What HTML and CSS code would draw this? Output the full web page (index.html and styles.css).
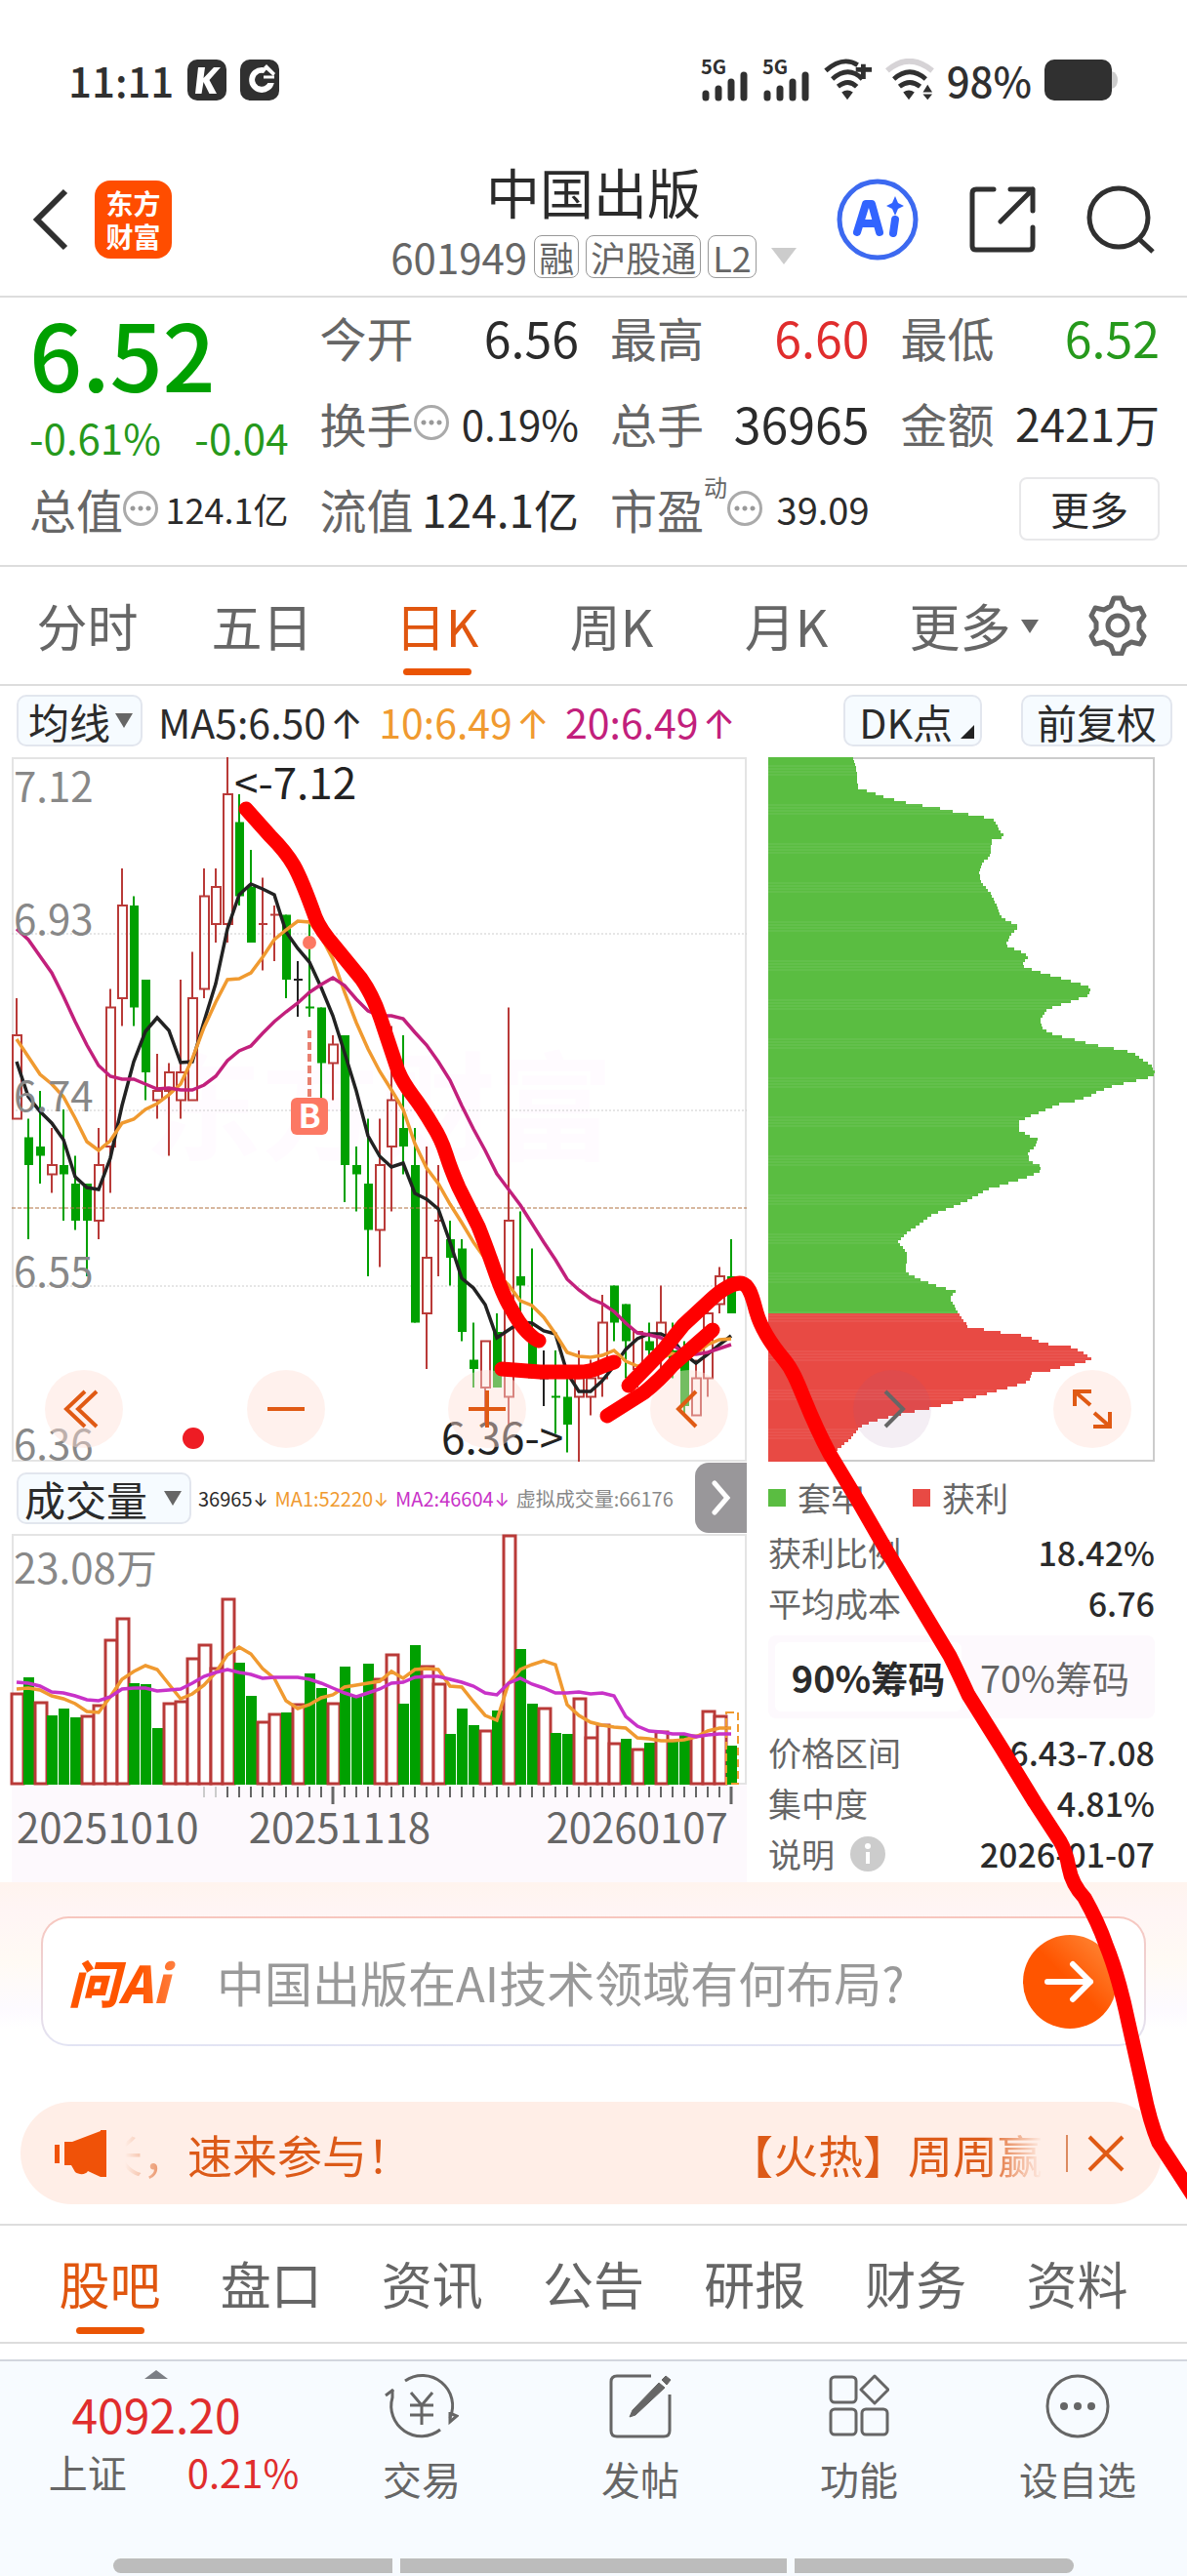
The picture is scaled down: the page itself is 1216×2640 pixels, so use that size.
FILE: index.html
```html
<!DOCTYPE html>
<html lang="zh-CN">
<head>
    <meta charset="UTF-8">
    <meta name="viewport" content="width=device-width, initial-scale=1.0">
    <title>中国出版 601949</title>
    <link rel="stylesheet" href="styles.css">
</head>
<body>
<div class="page">

    <!-- status bar -->
    <div class="status">
        <span class="time">11:11</span>
        <svg class="app-badge" viewBox="0 0 40 42"><rect width="40" height="42" rx="10" fill="#303030"/><path d="M11 8h7l-1.500 11L27 8h7L22.500 21 30 35h-7.500l-6-12L14.500 35H8z" fill="#fff"/></svg>
        <svg class="app-badge" viewBox="0 0 40 42"><rect width="40" height="42" rx="10" fill="#303030"/><path d="M23 8a13 13 0 1 0 12 15l-6-1a7 7 0 1 1-5-8l4-5z" fill="#fff"/><path d="M27 5l9 9-2 3-10-9z" fill="#fff"/><path d="M20 14l8 6h8v4H20l-5-3z" fill="#303030"/><path d="M24 18h11" stroke="#fff" stroke-width="3"/></svg>
        <div class="status-right">
            <svg class="signal" viewBox="0 0 50 44"><text x="0" y="16">5G</text><path d="M5 36v4M18 31v9M31 24v16M44 17v23" stroke="#303030" stroke-width="7" stroke-linecap="round"/></svg>
            <svg class="signal" viewBox="0 0 50 44"><text x="0" y="16">5G</text><path d="M5 36v4M18 31v9M31 24v16M44 17v23" stroke="#303030" stroke-width="7" stroke-linecap="round"/></svg>
            <svg class="wifi" viewBox="0 0 52 44"><g fill="none" stroke="#303030" stroke-width="5"><path d="M2 12Q20-4 36 6"/><path d="M9 21q17-15 32 0M15 29q11-9 20 0"/><path d="M42 5v16M34 11h17"/></g><path d="M19 35q6-4 12 0l-6 8z" fill="#303030"/></svg>
            <svg class="wifi" viewBox="0 0 52 44"><path d="M2 12q23-20 48 0" fill="none" stroke="#d6d3d6" stroke-width="6"/><path d="M9 21q17-15 34 0M15 29q11-9 22 0" fill="none" stroke="#303030" stroke-width="5"/><path d="M19 35q6-4 12 0l-6 8zM45 27l5 8H40zM45 43l5-6H40z" fill="#303030"/></svg>
            <span class="percent">98%</span>
            <svg class="battery" viewBox="0 0 76 42"><rect width="69" height="42" rx="10" fill="#303030"/><path d="M69 12q6 2 6 9t-6 9z" fill="#ccc"/></svg>
        </div>
    </div>

    <!-- title bar -->
    <header class="header">
        <div class="header-left">
            <button class="icon-btn" aria-label="返回"><svg width="38" height="66" viewBox="0 0 38 66"><path d="M34 4L5 33l29 29" fill="none" stroke="#303030" stroke-width="6"/></svg></button>
            <a class="logo" href="#"><span>东方</span><span>财富</span></a>
        </div>
        <div class="stock">
            <h1>中国出版</h1>
            <div class="code">
                <span class="num">601949</span><span class="tag">融</span><span class="tag">沪股通</span><span class="tag">L2</span>
                <svg width="26" height="17" viewBox="0 0 26 17"><path d="M0 0h26L13 17z" fill="#ccc"/></svg>
            </div>
        </div>
        <div class="header-right">
            <button class="icon-btn" aria-label="AI"><svg width="84" height="84" viewBox="0 0 84 84"><circle cx="42" cy="42" r="39" fill="none" stroke="#3c69f0" stroke-width="5"/><path d="M21 55L30 26h6l8 29" fill="none" stroke="#3264ff" stroke-width="8" stroke-linejoin="round" stroke-linecap="round"/><path d="M26 46h14M60 42l-2 14" stroke="#3264ff" stroke-width="8" stroke-linecap="round"/><path d="M60 18l3 7 6 3-6 3-3 7-3-7-6-3 6-3z" fill="#3264ff"/></svg></button>
            <button class="icon-btn" aria-label="分享"><svg width="68" height="68" viewBox="0 0 68 68"><g fill="none" stroke="#303030" stroke-width="5" stroke-linecap="round" stroke-linejoin="round"><path d="M25 3H7q-4 0-4 4v54q0 4 4 4h54q4 0 4-4V42"/><path d="M42 3h23v22M65 3L32 36"/></g></svg></button>
            <button class="icon-btn" aria-label="搜索"><svg width="70" height="70" viewBox="0 0 70 70"><circle cx="33" cy="33" r="30" fill="none" stroke="#303030" stroke-width="5"/><path d="M54 55l14 13" stroke="#303030" stroke-width="5"/></svg></button>
        </div>
    </header>

    <!-- quote -->
    <section class="quote">
        <div class="price">
            <strong>6.52</strong>
            <div class="change"><span>-0.61%</span><span>-0.04</span></div>
        </div>
        <div class="cell"><span>今开</span><b class="n5">6.56</b></div>
        <div class="cell"><span>最高</span><b class="n5 red">6.60</b></div>
        <div class="cell"><span>最低</span><b class="n5 green">6.52</b></div>
        <div class="cell"><span>换手</span><i class="dots"></i><b class="n3">0.19%</b></div>
        <div class="cell"><span>总手</span><b class="n5">36965</b></div>
        <div class="cell"><span>金额</span><b class="n4">2421万</b></div>
        <div class="cell"><span>总值</span><i class="dots"></i><b class="n1">124.1亿</b></div>
        <div class="cell"><span>流值</span><b class="n4">124.1亿</b></div>
        <div class="cell"><span>市盈</span><sup>动</sup><i class="dots"></i><b class="n2">39.09</b></div>
        <div class="cell"><button class="more-btn">更多</button></div>
    </section>

    <!-- period tabs -->
    <nav class="periods">
        <a href="#">分时</a>
        <a href="#">五日</a>
        <a href="#" class="active">日K</a>
        <a href="#">周K</a>
        <a href="#">月K</a>
        <a href="#" class="has-arrow">更多</a>
        <button class="icon-btn" aria-label="设置"><svg width="62" height="62" viewBox="0 0 62 62"><g fill="none" stroke="#666" stroke-width="5" stroke-linejoin="round"><path d="M24 11L27 3h8l3 8 7 4 9-2 4 8-5 7v7l5 7-4 8-9-2-7 4-3 8h-8l-3-8-7-4-9 2-4-8 5-7v-7l-5-7 4-8 9 2z"/><circle cx="31" cy="31" r="10"/></g></svg></button>
    </nav>

    <!-- moving averages -->
    <div class="ma-bar">
        <label class="drop"><select aria-label="主图指标"><option>均线</option></select></label>
        <span class="ma">MA5:6.50<i class="arr">↑</i></span>
        <span class="ma orange">10:6.49<i class="arr">↑</i></span>
        <span class="ma magenta">20:6.49<i class="arr">↑</i></span>
        <button class="chip dk">DK点</button>
        <button class="chip">前复权</button>
    </div>

    <main class="charts">
        <div class="left">
            <div class="canvas">
                <svg id="kline" viewBox="0 0 753 722"></svg>
                <div class="float-btns">
                    <button aria-label="最前"><svg viewBox="0 0 80 80"><path d="M41 22L22 40l19 18M53 22L34 40l19 18"/></svg></button>
                    <button aria-label="缩小"><svg viewBox="0 0 80 80"><path d="M21 40h38"/></svg></button>
                    <button aria-label="放大"><svg viewBox="0 0 80 80"><path d="M21 40h38M40 21v38"/></svg></button>
                    <button aria-label="向左"><svg viewBox="0 0 80 80"><path d="M47 22L29 40l18 18"/></svg></button>
                </div>
            </div>
            <div class="vol-bar">
                <label class="drop wide"><select aria-label="副图指标"><option>成交量</option></select></label>
                <span>36965<i class="arr">↓</i></span>
                <span class="orange">MA1:52220<i class="arr">↓</i></span>
                <span class="violet">MA2:46604<i class="arr">↓</i></span>
                <span class="gray">虚拟成交量:66176</span>
                <button class="next" aria-label="下一个"><svg width="20" height="36" viewBox="0 0 20 36"><path d="M3 3l13 15L3 33" fill="none" stroke="#fff" stroke-width="5" stroke-linecap="round"/></svg></button>
            </div>
            <svg id="volume" viewBox="0 0 753 257"></svg>
            <div class="axis">
                <svg id="ticks" viewBox="0 0 753 20"></svg>
                <div class="dates"><span>20251010</span><span>20251118</span><span>20260107</span></div>
            </div>
        </div>

        <div class="right">
            <div class="canvas">
                <svg id="chips" viewBox="0 0 396 722"></svg>
                <div class="float-btns">
                    <button class="dim" aria-label="向右"><svg viewBox="0 0 80 80"><path d="M33 22l18 18-18 18"/></svg></button>
                    <button aria-label="全屏"><svg viewBox="0 0 80 80"><path d="M22 37V22h17M22 22l16 14M58 43v15H41M58 58L42 44"/></svg></button>
                </div>
            </div>
            <div class="legend"><span class="key-green">套牢</span><span class="key-red">获利</span></div>
            <div class="row"><span>获利比例</span><b>18.42%</b></div>
            <div class="row"><span>平均成本</span><b>6.76</b></div>
            <div class="switch"><button class="on">90%筹码</button><button>70%筹码</button></div>
            <div class="row"><span>价格区间</span><b>6.43-7.08</b></div>
            <div class="row"><span>集中度</span><b>4.81%</b></div>
            <div class="row"><span>说明</span><svg width="36" height="36" viewBox="0 0 36 36"><circle cx="18" cy="18" r="18" fill="#ccc"/><circle cx="18" cy="10" r="3" fill="#fff"/><path d="M18 16v12" stroke="#fff" stroke-width="4"/></svg><b>2026-01-07</b></div>
        </div>
    </main>

    <!-- ask AI -->
    <section class="ask">
        <form class="ask-box">
            <span class="ask-logo">问Ai</span>
            <input type="text" aria-label="问AI" placeholder="中国出版在AI技术领域有何布局?">
            <button type="button" aria-label="发送"><svg width="52" height="46" viewBox="0 0 52 46"><path d="M3 23h44M29 5l18 18-18 18" fill="none" stroke="#fff" stroke-width="6" stroke-linecap="round" stroke-linejoin="round"/></svg></button>
        </form>
    </section>

    <div class="notice">
        <svg width="54" height="48" viewBox="0 0 54 48"><path d="M0 15h5v19H0zM10 12h8L47 1v-1h6v48h-6l-13-6c-2 4-9 4-13 1l-4-7h-7z" fill="#f05208"/></svg>
        <div class="marquee"><span>长，速来参与！</span><span>【火热】周周赢</span></div>
        <button aria-label="关闭"><svg width="38" height="38" viewBox="0 0 38 38"><path d="M2 2l34 34M36 2L2 36" stroke="#e05a14" stroke-width="4"/></svg></button>
    </div>

    <nav class="sections">
        <a href="#" class="active">股吧</a>
        <a href="#">盘口</a>
        <a href="#">资讯</a>
        <a href="#">公告</a>
        <a href="#">研报</a>
        <a href="#">财务</a>
        <a href="#">资料</a>
    </nav>

    <!-- bottom bar -->
    <footer class="bottom">
        <div class="tabbar">
            <a href="#" class="index">
                <svg width="24" height="9" viewBox="0 0 24 9"><path d="M12 0l12 9H0z" fill="#7c7f85"/></svg>
                <b>4092.20</b>
                <div class="index-row"><span>上证</span><span class="red">0.21%</span></div>
            </a>
            <a href="#"><svg width="76" height="68" viewBox="0 0 76 68"><g fill="none" stroke="#666" stroke-width="3"><path d="M21 8A31 31 0 0 1 67 46M8 17v8A31 31 0 0 0 57 58"/><path d="M69 42l5 2-7 6V40M1 23l8-6"/><path d="M27 20l11 13 11-13M38 33v20M26 33h24M26 43h24"/></g></svg>交易</a>
            <a href="#"><svg width="66" height="68" viewBox="0 0 66 68"><path d="M44 3H9q-6 0-6 6v50q0 6 6 6h48q6 0 6-6V22" fill="none" stroke="#666" stroke-width="3"/><path d="M52 10l6 5-30 28-6 2 3-7zM55 7l4-4 5 4-4 5z" fill="#666" stroke="#666"/></svg>发帖</a>
            <a href="#"><svg width="62" height="68" viewBox="0 0 62 68"><g fill="none" stroke="#666" stroke-width="3"><rect x="2" y="4" width="26" height="26" rx="4"/><rect x="2" y="37" width="26" height="26" rx="4"/><rect x="34" y="37" width="26" height="26" rx="4"/><path d="M47 3l14 14-14 14-14-14z" stroke-linejoin="round"/></g></svg>功能</a>
            <a href="#"><svg width="68" height="68" viewBox="0 0 68 68"><circle cx="34" cy="34" r="31" fill="none" stroke="#666" stroke-width="3"/><g fill="#666"><circle cx="20" cy="34" r="4"/><circle cx="34" cy="34" r="4"/><circle cx="48" cy="34" r="4"/></g></svg>设自选</a>
        </div>
        <div class="home-bar"><span></span><span class="mid"></span><span></span></div>
    </footer>

    <!-- freehand marks over the page -->
    <svg class="marks" viewBox="0 0 1216 2640" preserveAspectRatio="none">
        <path d="M252 829L277 857Q293 873 301 887T323 940Q328 953 343 970L370 1003Q382 1020 390 1044T408 1098Q413 1110 423 1123T443 1153Q452 1167 457 1183T470 1217L490 1257Q498 1277 507 1303T523 1340Q532 1357 540 1365T552 1374"/>
        <path d="M514 1403L553 1406H593Q604 1406 613 1402T629 1396"/>
        <path d="M622 1451L660 1427Q675 1415 690 1398L730 1363"/>
        <path d="M644 1420L680 1383 700 1358 727 1333Q745 1316 758 1315C768 1315 771 1331 775 1345S787 1374 803 1393 823 1440 850 1490L880 1540 907 1587 943 1647 973 1697Q981 1713 992 1737L1027 1793 1060 1847 1086 1887Q1092 1897 1095 1914T1111 1945Q1125 1970 1133 1993 1146 2025 1156 2073L1171 2140Q1178 2175 1187 2196L1206 2225 1226 2256"/>
    </svg>
</div>
<script src="chart.js"></script>
</body>
</html>
```

FILE: styles.css
```css
* { box-sizing: border-box; margin: 0; padding: 0; }
body { font-family: "Noto Sans CJK SC", "Noto Sans", sans-serif; background: #fff; color: #2b2b2b; }
a { color: inherit; text-decoration: none; }
button, select, input { font: inherit; color: inherit; background: none; border: none; outline: none; }
b, i { font-weight: 400; font-style: normal; }
svg { display: block; flex-shrink: 0; }

.page { position: relative; overflow: hidden; }
.red { color: #e02d2d; }
.green { color: #26991c; }
.orange { color: #f09a30; }
.magenta { color: #c2207c; }
.violet { color: #c832c8; }
.gray { color: #888; }

.status {
    display: flex;
    align-items: center;
    gap: 14px;
    height: 150px;
    padding: 14px 70px 0;
    color: #303030;
}
.time { font-size: 42px; font-weight: 500; line-height: 60px; }
.app-badge { width: 40px; height: 42px; }
.status-right { display: flex; align-items: center; gap: 13px; margin-left: auto; }
.signal { width: 50px; height: 44px; overflow: visible; }
.signal text { font-size: 20px; font-weight: 700; fill: #303030; }
.wifi { width: 50px; height: 44px; }
.percent { font-size: 42px; font-weight: 500; line-height: 60px; }
.battery { width: 76px; height: 42px; }

.header {
    display: grid;
    grid-template-columns: 1fr auto 1fr;
    align-items: center;
    height: 153px;
    padding: 0 33px 4px;
}
.header-left, .header-right { display: flex; align-items: center; }
.header-left { gap: 26px; }
.header-right { justify-content: flex-end; gap: 52px; }
.icon-btn { cursor: pointer; }
.logo {
    display: flex;
    flex-direction: column;
    align-items: center;
    justify-content: center;
    width: 79px;
    height: 80px;
    border-radius: 16px;
    background: #ff4d00;
    color: #fff;
    font-size: 28px;
    font-weight: 700;
    line-height: 34px;
}
.stock { text-align: center; }
.stock h1 { font-size: 55px; font-weight: 400; line-height: 76px; }
.code { display: flex; align-items: center; gap: 7px; color: #666; }
.code .num { font-size: 42px; line-height: 60px; }
.code .tag { border: 1px solid #999; border-radius: 8px; padding: 0 4px; font-size: 36px; line-height: 42px; }
.code svg { margin-left: 8px; }

.quote {
    display: grid;
    grid-template-columns: repeat(4, 1fr);
    grid-auto-rows: 88px;
    column-gap: 32px;
    padding: 0 28px 10px 30px;
    border-top: 2px solid #ddd;
    border-bottom: 2px solid #ddd;
}
.price { grid-row: span 2; color: #00a000; }
.price strong { display: block; font-size: 95px; font-weight: 500; line-height: 112px; }
.change { display: flex; justify-content: space-between; font-size: 42px; line-height: 62px; color: #26991c; }
.cell { display: flex; align-items: center; padding-bottom: 8px; white-space: nowrap; }
.cell span { font-size: 48px; color: #666; }
.cell b { margin-left: auto; }
.cell sup { font-size: 24px; color: #666; align-self: flex-start; }
.n1 { font-size: 36px; }
.n2 { font-size: 38px; }
.n3 { font-size: 42px; }
.n4 { font-size: 46px; }
.n5 { font-size: 50px; }
.dots {
    width: 36px;
    height: 36px;
    border: 3px solid #aaa;
    border-radius: 50%;
    background: radial-gradient(circle, #999 2px, transparent 3px) center / 8px 8px;
    background-clip: content-box;
    padding: 11px 3px;
}
.more-btn {
    margin-left: auto;
    width: 144px;
    height: 65px;
    border: 2px solid #e8e8ea;
    border-radius: 8px;
    font-size: 40px;
    line-height: 56px;
}

.periods {
    display: grid;
    grid-template-columns: repeat(5, 179fr) 205fr 90fr;
    align-items: center;
    height: 122px;
    padding-right: 26px;
    border-bottom: 2px solid #ddd;
    font-size: 52px;
    color: #666;
    text-align: center;
}
.periods a, .sections a { line-height: 118px; }
.active { color: #e0560f; position: relative; }
.active::after {
    content: "";
    position: absolute;
    left: 50%;
    bottom: 8px;
    width: 70px;
    height: 7px;
    margin-left: -35px;
    border-radius: 4px;
    background: #ea5404;
}
.has-arrow::after {
    content: "";
    display: inline-block;
    margin-left: 10px;
    vertical-align: 14px;
    border: 9px solid transparent;
    border-top: 14px solid #666;
    border-bottom: 0;
}
.periods .icon-btn svg { margin: 0 auto; }

.ma-bar { display: flex; align-items: center; height: 73px; padding: 0 15px 2px 17px; font-size: 41px; white-space: nowrap; }
.drop, .chip {
    display: flex;
    align-items: center;
    flex-shrink: 0;
    height: 53px;
    border: 2px solid #e2e6ee;
    border-radius: 10px;
    background: #f6fbff;
}
.drop { padding: 0 8px 0 10px; gap: 4px; font-size: 42px; }
.drop select { appearance: none; height: 49px; line-height: 49px; }
.drop::after { content: ""; border: 9px solid transparent; border-top: 15px solid #666; border-bottom: 0; }
.wide { gap: 16px; padding-left: 6px; }
.arr { font-family: Inter, sans-serif; margin-left: 4px; }
.ma { margin-left: 16px; }
.chip { padding: 0 14px; }
.dk { margin: 0 40px 0 auto; gap: 8px; padding-right: 6px; }
.dk::after { content: ""; align-self: flex-end; margin-bottom: 6px; border-left: 14px solid transparent; border-bottom: 14px solid #222; }

.charts {
    display: grid;
    grid-template-columns: minmax(0, 753fr) minmax(0, 396fr);
    column-gap: 22px;
    padding: 0 33px 0 12px;
}
.canvas { position: relative; }
.canvas svg, #volume, #ticks { width: 100%; overflow: visible; }
.label { font-size: 42px; fill: #888; }
.note { font-size: 44px; fill: #222; }
.watermark { font-size: 120px; font-weight: 700; fill: #fffbff; text-anchor: middle; }
.float-btns { position: absolute; left: 34px; right: 19px; bottom: 14px; display: flex; justify-content: space-between; }
.right .float-btns { left: 22%; right: 6%; }
.float-btns button { width: 80px; height: 80px; border-radius: 50%; background: rgba(255, 225, 214, 0.45); }
.float-btns path { fill: none; stroke: #e05a14; stroke-width: 4; }
.float-btns .dim { background: rgba(150, 90, 150, 0.1); }
.float-btns .dim path { stroke: #666; }

.vol-bar {
    display: flex;
    align-items: center;
    height: 74px;
    padding-left: 5px;
    gap: 7px;
    font-size: 20px;
    white-space: nowrap;
}
.vol-bar .arr { margin-left: 1px; font-size: 18px; }
.next {
    display: flex;
    align-items: center;
    justify-content: center;
    flex-shrink: 0;
    width: 53px;
    height: 72px;
    margin-left: auto;
    border-radius: 14px 0 0 14px;
    background: #99979a;
}
.axis { height: 100px; background: #fdf9fd; }
.dates { display: grid; grid-template-columns: 237fr 304fr 205fr; padding-left: 5px; font-size: 42px; line-height: 44px; color: #666; }

.legend { display: flex; gap: 50px; margin: 11px 0 4px; font-size: 34px; line-height: 52px; color: #666; }
.legend span { display: flex; align-items: center; gap: 12px; }
.legend span::before { content: ""; width: 18px; height: 18px; background: #5abd41; }
.legend .key-red::before { background: #e84a44; }
.row { display: flex; align-items: center; gap: 16px; font-size: 34px; line-height: 52px; color: #666; white-space: nowrap; }
.row b { margin-left: auto; font-weight: 500; color: #2b2b2b; }
.switch {
    display: grid;
    grid-template-columns: 1fr 1fr;
    height: 85px;
    margin: 7px 0 9px;
    padding: 7px;
    border-radius: 8px;
    background: #fdf9fd;
    font-size: 38px;
    color: #666;
    white-space: nowrap;
}
.switch button { border-radius: 6px; }
.switch .on { background: #fff; font-weight: 700; color: #2b2b2b; }

.ask { padding: 35px 42px 57px; background: linear-gradient(#fff4ee, #fff5f5 30px, #fffaf4 80px, #fdfaff 130px, #fff 150px); }
.ask-box {
    display: flex;
    align-items: center;
    height: 133px;
    padding: 0 28px 0 26px;
    border: 2px solid transparent;
    border-radius: 28px;
    background: linear-gradient(#fff, #fff) padding-box, linear-gradient(#f7c6be, #e2e4f4) border-box;
}
.ask-logo {
    width: 120px;
    font-size: 52px;
    font-weight: 900;
    font-style: italic;
    background: linear-gradient(90deg, #ff5500 60%, #ff8a50);
    background-clip: text;
    color: transparent;
    white-space: nowrap;
}
.ask-box input { flex: 1; min-width: 0; margin-left: 32px; font-size: 49px; }
.ask-box input::placeholder { color: #999; }
.ask-box button {
    display: flex;
    align-items: center;
    justify-content: center;
    width: 96px;
    height: 96px;
    border-radius: 50%;
    background: linear-gradient(45deg, #ff5500 50%, #ff9040);
}

.notice {
    display: flex;
    align-items: center;
    height: 105px;
    margin: 0 26px 20px 21px;
    padding: 0 38px 0 35px;
    border-radius: 53px;
    background: #ffeee7;
    color: #dc5a18;
}
.marquee {
    display: flex;
    justify-content: space-between;
    flex: 1;
    margin: 0 24px 0 18px;
    overflow: hidden;
    font-size: 46px;
    line-height: 64px;
    white-space: nowrap;
    mask-image: linear-gradient(90deg, transparent, #000 60px, #000 calc(100% - 60px), transparent);
}
.marquee span:first-child { margin-left: -28px; }
.notice button { padding-left: 20px; border-left: 2px solid #dc8a60; }

.sections {
    display: grid;
    grid-template-columns: repeat(7, 1fr);
    height: 123px;
    padding: 0 30px;
    border-top: 2px solid #ddd;
    border-bottom: 2px solid #ddd;
    font-size: 52px;
    color: #666;
    text-align: center;
}

.bottom { margin-top: 16px; border-top: 2px solid #d2d6de; background: #f7fbff; color: #666; }
.tabbar { display: grid; grid-template-columns: 320fr repeat(4, 224fr); height: 202px; }
.tabbar a {
    display: flex;
    flex-direction: column;
    align-items: center;
    font-size: 40px;
    line-height: 80px;
    padding-top: 12px;
}
.tabbar .index { padding-top: 9px; }
.index b { font-size: 48px; line-height: 70px; color: #e02d2d; }
.index-row { display: flex; gap: 62px; padding-left: 36px; line-height: 50px; }
.home-bar { display: flex; gap: 8px; width: 81%; height: 18px; margin: 0 auto; padding-bottom: 3px; }
.home-bar span { flex: 286; border-radius: 8px 0 0 8px; background: #bcbcbc; }
.home-bar .mid { flex: 394; border-radius: 0; }
.home-bar span:last-child { border-radius: 0 8px 8px 0; }

.marks { position: absolute; left: 0; top: 0; width: 100%; height: 100%; pointer-events: none; }
.marks path { fill: none; stroke: #f00; stroke-width: 15; stroke-linecap: round; stroke-linejoin: round; }
```

FILE: chart.js
```javascript
const RED = '#b93a38', GREEN = '#00a000', DARK = '#222';
const STEP = 12, X0 = 5, CENT = 9.5;

// kind, high, body top, body bottom, low - in cents below 7.12
const candles = [
    ['r',26,30,39,39],['g',39,41,44,52],['g',36,42,43,46],['r',40,44,45,47],['g',38,44,45,50],
    ['g',43,46,50,51],['g',46,46,50,56],['r',40,44,50,52],['r',25,27,42,47],['r',12,16,26,29],
    ['g',15,16,27,29],['g',24,24,34,37],['r',32,36,37,39],['r',33,34,36,43],['r',24,34,37,39],
    ['r',21,26,37,37],['r',12,15,25,26],['r',12,14,18,20],['r',0,4,18,20],['g',4,7,15,16],
    ['g',10,14,20,20],['r',13,18,18,23],['r',16,17,17,22],['g',17,17,24,26],['k',22,24,24,28],
    ['g',18,27,27,28],['g',27,27,33,37],['r',30,31,33,37],['g',30,30,44,48],['g',42,44,45,49],
    ['g',39,46,51,56],['r',39,44,51,55],['r',29,37,42,49],['g',30,40,42,45],['g',40,44,61,61],
    ['r',42,54,60,66],['r',44,50,50,56],['g',50,52,54,57],['g',52,53,62,63],['g',61,65,66,68],
    ['r',63,63,68,72],['g',60,62,68,68],['r',27,50,69,72],['g',49,56,57,61],['g',53,63,67,67],
    ['k',64,67,67,70],['g',64,69,69,73],['g',66,69,72,75],['r',64,67,69,76],['r',65,67,69,71],
    ['r',58,61,67,69],['g',57,57,61,63],['g',59,59,63,67],['r',62,62,66,68],['g',61,63,64,65],
    ['r',57,61,64,66],['g',61,64,65,67],['g',63,64,70,71],['r',65,67,71,71],['r',59,60,67,69],
    ['r',55,56,59,60],['g',52,56,60,60]
];
const ma5 = [312,348,363,375,392,430,441,443,411,357,312,281,267,280,313,312,271,232,176,141,130,135,141,179,196,210,236,265,303,342,388,409,420,416,447,453,463,497,534,544,561,595,587,579,580,588,591,631,650,650,639,624,607,596,591,591,597,612,621,612,602,593];
const ma10 = [289,307,325,335,348,370,394,403,393,375,371,361,355,346,335,309,277,251,228,227,221,205,187,177,168,169,184,207,241,272,299,322,341,361,396,421,437,458,477,497,514,529,541,557,562,574,591,610,614,615,613,608,619,624,623,616,611,614,611,602,597,596];
const ma20 = [176,187,204,221,245,271,295,316,327,330,330,335,340,339,341,341,336,327,311,301,296,283,271,261,252,241,233,226,234,248,260,265,265,268,282,295,312,331,357,381,403,427,443,459,478,497,515,535,546,555,560,568,580,590,592,595,602,611,612,610,606,602];

const volumes = [94,110,85,71,78,69,71,82,149,171,104,103,58,84,86,130,144,120,191,125,91,65,73,74,83,114,99,84,121,90,124,109,134,83,143,122,104,52,78,61,56,76,256,139,83,79,53,52,89,49,62,43,47,37,43,55,44,51,51,76,71,40];
const volKinds = 'rgrgggrrrrgggrrrrrrggrrgrggrgggrrggrrgggrgrggrggrrrrgrgrggrrrg';
const vma1 = [159,158,160,166,169,174,182,183,167,149,141,135,139,154,169,164,155,142,124,116,123,138,148,171,179,175,168,165,157,155,153,151,141,148,139,138,139,156,157,172,186,191,153,139,134,130,134,175,186,193,196,198,199,209,210,212,212,211,208,202,199,199];
const vma2 = [152,153,156,162,163,166,170,171,167,159,158,158,161,160,159,153,146,142,139,142,144,148,147,147,147,149,153,158,163,167,163,159,153,152,147,146,146,149,152,156,163,165,153,148,154,158,163,163,162,164,163,166,187,197,202,203,205,205,208,206,205,205];

// chip distribution outline: y, width
const outline = [
    [0,87],[8,90],[31,92],[33,101],[36,110],[40,120],[43,133],[46,145],[48,158],[51,176],[55,193],[58,211],[60,221],[63,231],
    [73,237],[80,242],[84,229],[100,227],[106,220],[116,216],[127,218],[137,227],[153,235],[163,239],[166,245],[172,257],
    [180,249],[191,243],[194,250],[197,257],[203,267],[212,259],[215,267],[218,276],[221,285],[224,297],[227,307],[230,316],
    [233,327],[236,331],[243,327],[246,318],[250,307],[254,293],[258,285],[268,278],[277,281],[283,293],[288,314],[292,329],
    [295,343],[298,359],[301,373],[308,383],[315,393],[322,396],[326,393],[329,381],[332,368],[335,355],[341,338],[346,329],
    [351,314],[354,298],[360,284],[366,269],[372,257],[381,257],[388,270],[390,276],[400,272],[403,266],[412,267],[418,280],
    [424,277],[430,262],[437,240],[442,223],[452,206],[461,185],[467,168],[476,157],[485,143],[495,133],[507,142],[526,141],
    [533,153],[540,172],[546,192],[553,186],[569,195],[578,202],[582,204],[585,221],[588,238],[590,255],[593,267],[597,277],
    [600,287],[602,308],[609,323],[615,331],[618,325],[621,314],[624,299],[628,285],[630,270],[636,268],[640,262],[646,241],
    [652,221],[658,196],[665,170],[670,145],[676,118],[681,103],[685,94],[696,85],[709,70],[722,58]
];

const x = i => X0 + i * STEP;
const line = (x1, y1, x2, y2, color, w, extra = '') =>
    `<line x1="${x1}" y1="${y1}" x2="${x2}" y2="${y2}" stroke="${color}" stroke-width="${w}" ${extra}/>`;
const poly = (ys, color) =>
    `<polyline points="${ys.map((y, i) => x(i) + ',' + y).join(' ')}" fill="none" stroke="${color}" stroke-width="3.5"/>`;

function drawKline() {
    let s = '<text class="watermark" x="376" y="404">东方财富</text>';
    s += '<rect x="1" y="1" width="751" height="720" fill="none" stroke="#e4e4e4" stroke-width="2"/>';
    [181, 362, 542].forEach(y => s += line(0, y, 753, y, '#ccc', 1, 'stroke-dasharray="2 2"'));
    candles.forEach(([kind, high, top, bottom, low], i) => {
        const color = kind === 'r' ? RED : kind === 'g' ? GREEN : DARK;
        const t = top * CENT, b = bottom * CENT;
        if (top === bottom) {
            s += line(x(i), high * CENT, x(i), low * CENT, color, 2) + line(x(i) - 4, t, x(i) + 5, t, color, 2);
        } else if (kind === 'r') {
            s += line(x(i), high * CENT, x(i), t, color, 2) + line(x(i), b, x(i), low * CENT, color, 2);
            s += `<rect x="${x(i) - 4}" y="${t}" width="9" height="${b - t}" fill="none" stroke="${color}" stroke-width="2"/>`;
        } else {
            s += line(x(i), high * CENT, x(i), low * CENT, color, 2);
            s += `<rect x="${x(i) - 4}" y="${t}" width="9" height="${b - t}" fill="${color}"/>`;
        }
    });
    s += line(0, 462, 753, 462, '#b07040', 1, 'stroke-dasharray="4 2"');
    s += poly(ma5, DARK) + poly(ma10, '#f09a30') + poly(ma20, '#c2207c');
    [['7.12', 46], ['6.93', 182], ['6.74', 363], ['6.55', 543], ['6.36', 720]].forEach(([t, y]) =>
        s += `<text class="label" x="2" y="${y}">${t}</text>`);
    s += '<text class="note" x="228" y="43">&lt;-7.12</text><text class="note" x="440" y="714">6.36-&gt;</text>';
    // buy marker
    s += '<circle cx="305" cy="190" r="7" fill="#fc7863"/>' + line(305, 280, 305, 348, '#e88070', 4, 'stroke-dasharray="8 4"');
    s += '<rect x="286" y="349" width="38" height="38" rx="6" fill="#fc7863"/>';
    s += '<text x="305" y="380" fill="#fff" font-size="34" font-weight="700" text-anchor="middle">B</text>';
    s += '<circle cx="186" cy="698" r="11" fill="#ee1c24"/>';
    document.getElementById('kline').innerHTML = s;
}

function drawVolume() {
    let s = '<rect x="1" y="1" width="751" height="255" fill="none" stroke="#e4e4e4" stroke-width="2"/>';
    volumes.forEach((h, i) => {
        if (volKinds[i] === 'r') s += `<rect x="${x(i) - 5}" y="${258 - h}" width="12" height="${h - 2}" fill="#fff" stroke="${RED}" stroke-width="3"/>`;
        else s += `<rect x="${x(i) - 5}" y="${257 - h}" width="11" height="${h}" fill="${GREEN}"/>`;
    });
    s += `<rect x="${x(61) - 5}" y="183" width="12" height="73" fill="none" stroke="#f09a30" stroke-width="2" stroke-dasharray="8 4"/>`;
    s += poly(vma1, '#f09a30') + poly(vma2, '#c832c8');
    s += '<text class="label" x="2" y="51">23.08万</text>';
    document.getElementById('volume').innerHTML = s;

    let t = '';
    for (let i = 16; i < 62; i++) {
        const major = i === 27 || i === 61;
        t += line(x(i), 2, x(i), major ? 20 : 13, i < 18 ? '#ccc' : '#666', major ? 3 : 2);
    }
    document.getElementById('ticks').innerHTML = t;
}

function drawChips() {
    const width = y => {
        const k = Math.max(1, outline.findIndex(p => p[0] >= y));
        const [y0, w0] = outline[k - 1], [y1, w1] = outline[k];
        return Math.round(w0 + (w1 - w0) * (y - y0) / (y1 - y0));
    };
    let s = '<rect x="1" y="1" width="394" height="720" fill="none" stroke="#ccc" stroke-width="2"/>';
    const build = (from, to, color) => {
        let d = `M0 ${from}`;
        for (let y = from; y < to; y += 3) d += `H${width(y)}V${Math.min(y + 3, to)}`;
        s += `<path d="${d}H0z" fill="${color}"/>`;
    };
    build(0, 570, '#5abd41');
    build(570, 722, '#e84a44');
    for (let g = 9; g < 710; g += 40) {
        for (let k = 0; k < 4; k++) s += line(0, g + k * 3, width(g + k * 3), g + k * 3, 'rgba(255,255,255,0.12)', 1);
    }
    document.getElementById('chips').innerHTML = s;
}

drawKline();
drawVolume();
drawChips();
```
